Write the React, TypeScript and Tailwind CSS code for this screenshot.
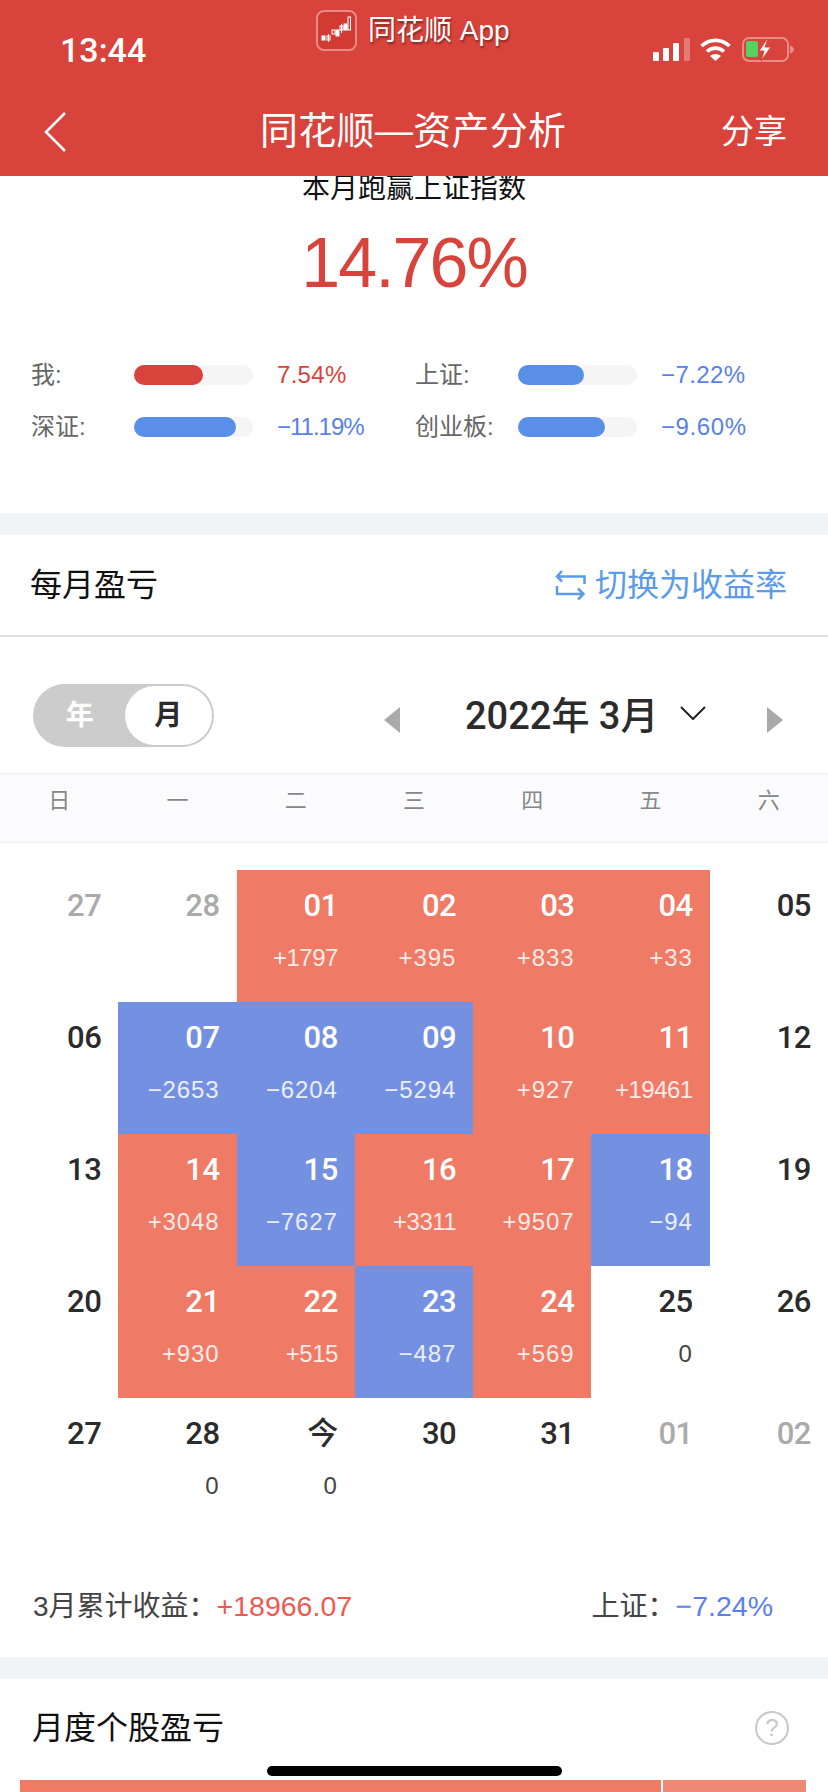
const FONT = "font-['Liberation_Sans','Noto_Sans_CJK_SC',sans-serif]";

type Day = { d: string; v?: string; tone?: "red" | "blue"; muted?: boolean };

const weeks: Day[][] = [
  [
    { d: "27", muted: true },
    { d: "28", muted: true },
    { d: "01", v: "+1797", tone: "red" },
    { d: "02", v: "+395", tone: "red" },
    { d: "03", v: "+833", tone: "red" },
    { d: "04", v: "+33", tone: "red" },
    { d: "05" },
  ],
  [
    { d: "06" },
    { d: "07", v: "−2653", tone: "blue" },
    { d: "08", v: "−6204", tone: "blue" },
    { d: "09", v: "−5294", tone: "blue" },
    { d: "10", v: "+927", tone: "red" },
    { d: "11", v: "+19461", tone: "red" },
    { d: "12" },
  ],
  [
    { d: "13" },
    { d: "14", v: "+3048", tone: "red" },
    { d: "15", v: "−7627", tone: "blue" },
    { d: "16", v: "+3311", tone: "red" },
    { d: "17", v: "+9507", tone: "red" },
    { d: "18", v: "−94", tone: "blue" },
    { d: "19" },
  ],
  [
    { d: "20" },
    { d: "21", v: "+930", tone: "red" },
    { d: "22", v: "+515", tone: "red" },
    { d: "23", v: "−487", tone: "blue" },
    { d: "24", v: "+569", tone: "red" },
    { d: "25", v: "0" },
    { d: "26" },
  ],
  [
    { d: "27" },
    { d: "28", v: "0" },
    { d: "今", v: "0" },
    { d: "30" },
    { d: "31" },
    { d: "01", muted: true },
    { d: "02", muted: true },
  ],
];

const stats = [
  { label: "我:", bar: "w-[69px]", color: "bg-[#d8433b]", value: "7.54%", text: "text-[#d8433b] tracking-[0.3px]" },
  { label: "上证:", bar: "w-[66px]", color: "bg-[#5a8fe8]", value: "−7.22%", text: "text-[#5a80ea] tracking-[0.4px]" },
  { label: "深证:", bar: "w-[102px]", color: "bg-[#5a8fe8]", value: "−11.19%", text: "text-[#5a80ea] tracking-[-1px]" },
  { label: "创业板:", bar: "w-[87px]", color: "bg-[#5a8fe8]", value: "−9.60%", text: "text-[#5a80ea] tracking-[0.6px]" },
];

function StatusIcons() {
  return (
    <div className="flex items-center gap-[10px] mt-[5px]">
      <svg width="37" height="23" viewBox="0 0 37 23">
        <rect x="0" y="14" width="6" height="9" rx="1" fill="#fff" />
        <rect x="10" y="10" width="6" height="13" rx="1" fill="#fff" />
        <rect x="20" y="5" width="6" height="18" rx="1" fill="#fff" />
        <rect x="31" y="0" width="6" height="23" rx="1" fill="#fff" fillOpacity="0.3" />
      </svg>
      <svg width="31" height="23" viewBox="0 0 31 23" fill="none" stroke="#fff" strokeWidth="3.6">
        <path d="M1.500 8C9.500 0.500 21.500 0.500 29.500 8" />
        <path d="M7 13.500C11.800 9 19.200 9 24 13.500" />
        <path d="M15.500 23l-5.500-5c3-2.800 8-2.800 11 0z" fill="#fff" stroke="none" />
      </svg>
      <svg className="ml-[1px]" width="52" height="25" viewBox="0 0 52 25" fill="none">
        <rect x="1" y="1" width="45" height="23" rx="6" stroke="#fff" strokeOpacity="0.4" strokeWidth="2" />
        <rect x="4" y="4" width="12" height="16" rx="2" fill="#55d061" />
        <path d="M48 8.500c2.500 1 4 2.500 4 4s-1.500 3-4 4z" fill="#fff" fillOpacity="0.4" />
        <path d="M25 2L17 14h5l-3 10 10-14h-6l3-8z" fill="#fff" stroke="#d8433b" strokeWidth="1" />
      </svg>
    </div>
  );
}

function AppBadge() {
  return (
    <div className="w-[41px] h-[41px] rounded-[8px] border-[2px] border-[#e98a84] bg-[#d23a34] flex items-center justify-center">
      <svg width="31" height="31" viewBox="0 0 31 31" fill="none" stroke="#fff" strokeWidth="1">
        <rect x="1" y="21" width="3" height="4" fill="#fff" />
        <rect x="6" y="21" width="3" height="4" />
        <path d="M7.500 19v8" />
        <rect x="11" y="15" width="3" height="4" />
        <rect x="15" y="15" width="3" height="6" fill="#fff" />
        <rect x="19" y="11" width="3" height="4" />
        <path d="M20.500 9v9" />
        <rect x="23" y="9" width="3" height="6" fill="#fff" />
        <rect x="27" y="2" width="2.500" height="13" />
      </svg>
    </div>
  );
}

function Cell({ day }: { day: Day }) {
  const bg = day.tone === "red" ? "bg-[#ef7a65]" : day.tone === "blue" ? "bg-[#7490e0]" : "";
  const dayColor = day.tone ? "text-white" : day.muted ? "text-[#aaaaaa]" : "text-[#2b2b2b]";
  const valColor = day.tone ? "text-white/85" : "text-[#444444]";
  // the 1 is narrower in the original font, so numbers without one run wider
  const spacing = day.v?.includes("1") ? "tracking-[-0.5px]" : "tracking-[0.9px]";
  return (
    <div className={`h-[132px] pr-[17px] pt-[19px] text-right ${bg}`}>
      <div className={`font-['Roboto','Noto_Sans_CJK_SC',sans-serif] text-[31px] leading-[34px] font-medium tracking-[-0.5px] ${dayColor}`}>
        {day.d}
      </div>
      {day.v && <div className={`mt-[21px] text-[24px] leading-[28px] ${spacing} ${valColor}`}>{day.v}</div>}
    </div>
  );
}

export default function App() {
  return (
    <div className={`relative w-[828px] h-[1792px] overflow-hidden bg-white ${FONT}`}>
      <header className="h-[176px] bg-[#d8433b] text-white relative">
        <div className="h-[87px] pl-[60px] pr-[34px] pt-[32px] flex items-start justify-between">
          <span className="font-['Roboto',sans-serif] text-[34px] leading-[36px] font-medium">13:44</span>
          <StatusIcons />
        </div>
        <div className="absolute top-[10px] left-[316px] flex items-center gap-[11px]">
          <AppBadge />
          <span className="text-[28px] leading-[40px] [text-shadow:1px_2px_2px_rgba(0,0,0,0.4)]">同花顺 App</span>
        </div>
        <div className="h-[89px] pl-[44px] pr-[41px] flex items-center">
          <svg width="22" height="40" viewBox="0 0 22 40" fill="none" stroke="#fff" strokeWidth="2.500">
            <path d="M21 1L2 20l19 19" />
          </svg>
          <span className="ml-[194px] text-[38px] tracking-[0.3px]">同花顺—资产分析</span>
          <span className="ml-auto text-[33px]">分享</span>
        </div>
      </header>

      <section className="h-[337px] flex flex-col items-center">
        <div className="text-[28px] leading-[28px] text-[#111111] mt-[-1px]">本月跑赢上证指数</div>
        <div className="text-[70px] leading-[80px] tracking-[-2px] text-[#d8433b] mt-[20px]">14.76%</div>
        <div className="mt-[57px] grid grid-cols-[384px_1fr] gap-y-[22px] w-full pl-[31px]">
          {stats.map((s) => (
            <div key={s.label} className="flex items-center h-[30px]">
              <span className="w-[103px] text-[24px] text-[#666666]">{s.label}</span>
              <div className="w-[119px] h-[20px] rounded-full bg-[#f5f5f5]">
                <div className={`h-full rounded-full ${s.bar} ${s.color}`} />
              </div>
              <span className={`ml-[24px] text-[24px] ${s.text}`}>{s.value}</span>
            </div>
          ))}
        </div>
      </section>

      <div className="h-[22px] bg-[#f2f4f6]" />

      <section className="h-[102px] border-b-[2px] border-[#e0e0e0] pl-[30px] pr-[41px] flex items-center justify-between">
        <span className="text-[32px] text-[#111111]">每月盈亏</span>
        <div className="flex items-center gap-[8px] text-[#5b9be8]">
          <svg width="32" height="30" viewBox="0 0 32 30" fill="none" stroke="currentColor" strokeWidth="2.500">
            <path d="M7 1L2 6.500l5 5M2 6.500h27.500V14" />
            <path d="M2 16v8h26M23 18.500l5.500 5.500-5.500 5.500" />
          </svg>
          <span className="text-[32px]">切换为收益率</span>
        </div>
      </section>

      <section className="h-[136px] pl-[33px] flex items-start">
        <div className="mt-[47px] w-[181px] h-[63px] rounded-full bg-[#cccccc] flex items-center justify-between p-[2px]">
          <span className="w-[90px] text-center text-[28px] font-bold text-white">年</span>
          <span className="w-[88px] h-full rounded-full bg-white flex items-center justify-center text-[28px] font-bold text-[#2b2b2b]">月</span>
        </div>
        <svg className="ml-[170px] mt-[70px]" width="16" height="26" viewBox="0 0 16 26">
          <path d="M16 0v26L0 13z" fill="#aaaaaa" />
        </svg>
        <span className="ml-[65px] mt-[54px] font-['Roboto','Noto_Sans_CJK_SC',sans-serif] text-[38px] leading-[50px] font-medium text-[#2b2b2b] whitespace-pre">2022年 3月</span>
        <svg className="ml-[22px] mt-[69px]" width="26" height="14" viewBox="0 0 26 14" fill="none" stroke="#222222" strokeWidth="2">
          <path d="M1 1l12 12L25 1" />
        </svg>
        <svg className="ml-[61px] mt-[70px]" width="16" height="26" viewBox="0 0 16 26">
          <path d="M0 0v26l16-13z" fill="#aaaaaa" />
        </svg>
      </section>

      <div className="h-[70px] bg-[#fbfbfd] border-y-[2px] border-[#f4f4f4] grid grid-cols-7 text-center text-[22px] leading-[44px] text-[#888888]">
        {["日", "一", "二", "三", "四", "五", "六"].map((w) => (
          <span key={w} className="pt-[4px]">{w}</span>
        ))}
      </div>

      <section className="pt-[27px]">
        {weeks.map((week, i) => (
          <div key={i} className="grid grid-cols-7">
            {week.map((day, j) => (
              <Cell key={j} day={day} />
            ))}
          </div>
        ))}
      </section>

      <section className="h-[127px] pt-[25px] pl-[33px] pr-[55px] flex items-center justify-between text-[28px] text-[#444444]">
        <span>3月累计收益：<span className="text-[28.5px] text-[#ef5a50]">+18966.07</span></span>
        <span>上证：<span className="text-[28.5px] text-[#5a80ea]">−7.24%</span></span>
      </section>

      <div className="h-[22px] bg-[#f2f4f6]" />

      <section className="h-[101px] pb-[3px] pl-[32px] pr-[39px] flex items-center justify-between">
        <span className="text-[32px] text-[#111111]">月度个股盈亏</span>
        <div className="w-[34px] h-[34px] rounded-full border-[2px] border-[#c8c8c8] flex items-center justify-center text-[24px] text-[#c8c8c8]">?</div>
      </section>

      <div className="flex h-[12px] pl-[20px] pr-[22px] gap-[2px]">
        <div className="flex-1 bg-[#ef7a65]" />
        <div className="w-[143px] bg-[#ee8a76]" />
      </div>

      <div className="absolute left-[267px] bottom-[16px] w-[295px] h-[10px] rounded-full bg-black" />
    </div>
  );
}
